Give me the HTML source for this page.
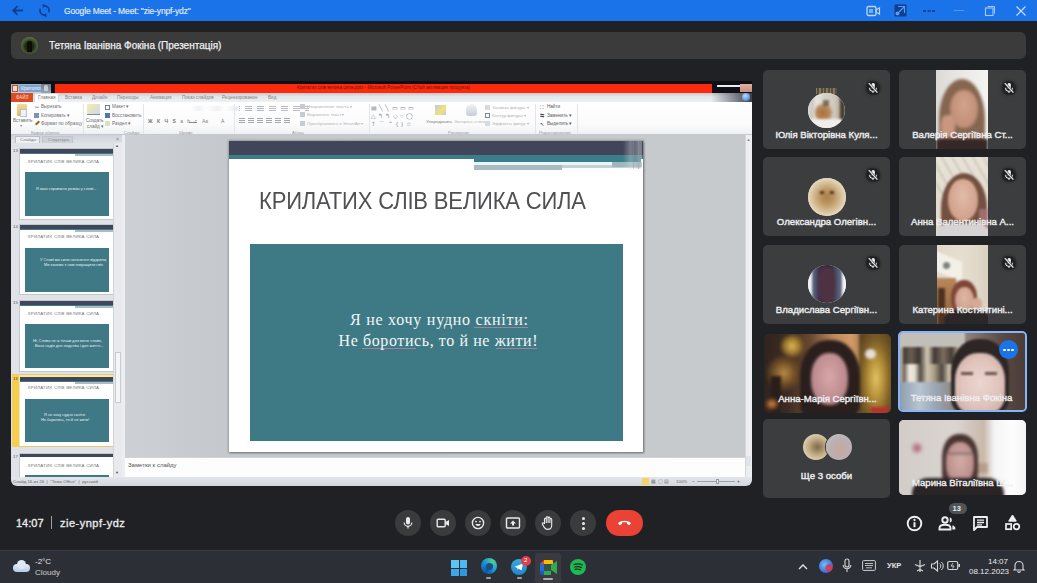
<!DOCTYPE html>
<html><head><meta charset="utf-8">
<style>
*{margin:0;padding:0;box-sizing:border-box}
html,body{width:1037px;height:583px;overflow:hidden;background:#202124;font-family:"Liberation Sans",sans-serif;position:relative}
.a{position:absolute}
.t{position:absolute;white-space:nowrap;line-height:1}
#title{left:0;top:0;width:1037px;height:21.4px;background:#1a73e8}
#namebar{left:11px;top:32px;width:1015px;height:27px;background:#3b3b3c;border-radius:6px}
/* PPT */
#ppt{left:11px;top:81px;width:741px;height:405px;background:#0f0f16;overflow:hidden;border-radius:0 0 6px 6px}
.pt{position:absolute;white-space:nowrap;line-height:1;color:#555;font-size:5px}
.tile{position:absolute;width:127px;height:79px;background:#3c3d3f;border-radius:5px;overflow:hidden}
.tname{position:absolute;left:0;right:0;top:59.5px;text-align:center;color:#eceef0;font-size:9.6px;-webkit-text-stroke:0.4px #eceef0;white-space:nowrap;line-height:1}
.mute{position:absolute;right:9px;top:11px;width:16px;height:14px;filter:drop-shadow(0 0 1px #111) drop-shadow(0 0 1.5px #222)}
.av{position:absolute;left:44px;top:22px;width:38px;height:38px;border-radius:50%;background:#b9a58c}
#taskbar{left:0;top:550px;width:1037px;height:33px;background:#2d2f36;box-shadow:inset 0 1px 0 #383b43}
.btn{position:absolute;top:510px;width:26px;height:26px;border-radius:50%;background:#3a3b3d}
</style></head><body>
<!-- TITLE BAR -->
<div id="title" class="a">
  <svg class="a" style="left:11px;top:4px" width="13" height="13" viewBox="0 0 13 13"><path d="M12 6.5H2.5M6.5 2.2L2.2 6.5L6.5 10.8" stroke="#0b3f96" stroke-width="1.8" fill="none"/></svg>
  <svg class="a" style="left:38px;top:4px" width="13" height="13" viewBox="0 0 13 13"><path d="M6.5 1.8A4.7 4.7 0 0 1 10.8 8.2M6.5 11.2A4.7 4.7 0 0 1 2.2 4.8" stroke="#0b3f96" stroke-width="1.7" fill="none"/><path d="M4.5 -0.2L8 1.8L4.8 3.8Z M8.5 13.2L5 11.2L8.2 9.2Z" fill="#0b3f96"/></svg>
  <div class="t" style="left:64px;top:6.5px;font-size:8.5px;color:#e3ecfb;letter-spacing:-0.15px;-webkit-text-stroke:0.15px #e3ecfb">Google Meet - Meet: "zie-ynpf-ydz"</div>
  <svg class="a" style="left:866px;top:5px" width="15" height="12" viewBox="0 0 15 12"><rect x="1" y="1.5" width="9" height="9" rx="1.5" stroke="#bcd4fb" stroke-width="1.3" fill="none"/><path d="M10 5L13.5 2.8V9.2L10 7Z" stroke="#bcd4fb" stroke-width="1.2" fill="none"/><rect x="3" y="4" width="4" height="4" fill="#bcd4fb" opacity=".6"/></svg>
  <svg class="a" style="left:894px;top:4px" width="13" height="13" viewBox="0 0 13 13"><rect x="0.5" y="0.5" width="12" height="12" rx="1" fill="#0e3f8f"/><path d="M4 2.5h6.5v6.5M10.5 2.5L5 8" stroke="#5b9af0" stroke-width="1.2" fill="none"/><circle cx="3.5" cy="9.5" r="2" fill="#5b9af0"/></svg>
  <div class="a" style="left:923px;top:10px;width:3px;height:2px;background:#0d47a1;box-shadow:4.5px 0 0 #0d47a1,9px 0 0 #0d47a1"></div>
  <div class="a" style="left:954px;top:10px;width:10px;height:1.2px;background:#5c95e8"></div>
  <svg class="a" style="left:984px;top:5px" width="12" height="12" viewBox="0 0 12 12"><rect x="1.5" y="3" width="7.5" height="7.5" stroke="#a8c7fa" stroke-width="1.1" fill="none"/><path d="M3.5 1.5H10.5V8.5" stroke="#a8c7fa" stroke-width="1" fill="none"/></svg>
  <svg class="a" style="left:1015px;top:5px" width="12" height="12" viewBox="0 0 12 12"><path d="M1.5 1.5L10.5 10.5M10.5 1.5L1.5 10.5" stroke="#c7dafc" stroke-width="1.2"/></svg>
</div>
<!-- NAME BAR -->
<div id="namebar" class="a">
  <div class="a" style="left:10px;top:5px;width:17px;height:17px;border-radius:50%;background:radial-gradient(circle at 50% 55%,#1d2415 30%,#4f6132 62%,#8aa05a 100%)"></div>
  <div class="a" style="left:16px;top:9px;width:5px;height:11px;background:#0c0e08;border-radius:2px 2px 0 0"></div>
  <div class="t" id="nm" style="left:38px;top:9px;font-size:10px;color:#eef0f2;-webkit-text-stroke:0.25px #eef0f2">Тетяна Іванівна Фокіна (Презентація)</div>
</div>

<!-- PPT WINDOW -->
<div id="ppt" class="a">
  <!-- title row -->
  <div class="a" style="left:0;top:3px;width:40px;height:8.5px;background:linear-gradient(#9fb0c6,#c9d3df)"></div>
  <div class="a" style="left:1px;top:4px;width:6px;height:7px;background:#e8e0d8;border:1px solid #c2502e"></div>
  <div class="a" style="left:8px;top:3.5px;width:22px;height:7px;background:#7fa3cf"></div>
  <div class="pt" style="left:10px;top:4.5px;font-size:5px;color:#f2f6fb">Критолог</div>
  <div class="a" style="left:30px;top:3px;width:10px;height:8.5px;background:linear-gradient(#6f7c8e,#9aa5b4)"></div><div class="a" style="left:33px;top:4px;width:4px;height:6px;background:#c6ccd4;border-radius:2px 2px 0 0"></div>
  <div class="a" style="left:44px;top:3px;width:657px;height:8.5px;background:#fb2a0c"></div>
  <div class="pt" style="left:286px;top:5px;font-size:4.6px;color:#7a1208">Критатих слів велика сила.pptx - Microsoft PowerPoint (Сбой активации продукта)</div>
  <div class="a" style="left:706px;top:3.5px;width:24px;height:2px;background:#e9ecef"></div>
  <div class="a" style="left:729px;top:3px;width:12px;height:8px;background:linear-gradient(#e2b0a2,#c98f80)"></div>
  <!-- tabs row -->
  <div class="a" style="left:0;top:11.5px;width:741px;height:9.5px;background:linear-gradient(#c5c8cc,#e4e7ea 40%,#eef0f2)"></div>
  <div class="a" style="left:700px;top:11.5px;width:41px;height:9.5px;background:linear-gradient(90deg,rgba(40,40,50,0),#3a3f4a)"></div>
  <div class="a" style="left:731px;top:12px;width:8px;height:8px;border-radius:50%;background:radial-gradient(circle at 40% 35%,#b9dcff,#2f6fc4)"></div>
  <div class="a" style="left:0;top:12px;width:21.5px;height:9px;background:#d84d26"></div>
  <div class="pt" style="left:5px;top:14.5px;color:#ffd9c9;font-size:4.5px">ФАЙЛ</div>
  <div class="a" style="left:23px;top:12px;width:25px;height:10px;background:#fcfcfc;border:1px solid #d5d9de;border-bottom:none"></div>
  <div class="pt" style="left:27px;top:14.5px;font-size:4.6px;color:#7a7a7a">Главная</div>
  <div class="pt" style="left:54px;top:14.5px;font-size:4.6px;color:#858585">Вставка</div>
  <div class="pt" style="left:81px;top:14.5px;font-size:4.6px;color:#858585">Дизайн</div>
  <div class="pt" style="left:106px;top:14.5px;font-size:4.6px;color:#858585">Переходы</div>
  <div class="pt" style="left:139px;top:14.5px;font-size:4.6px;color:#858585">Анимация</div>
  <div class="pt" style="left:171px;top:14.5px;font-size:4.6px;color:#858585">Показ слайдов</div>
  <div class="pt" style="left:211px;top:14.5px;font-size:4.6px;color:#858585">Рецензирование</div>
  <div class="pt" style="left:257px;top:14.5px;font-size:4.6px;color:#858585">Вид</div>
  <!-- ribbon -->
  <div class="a" style="left:0;top:21px;width:741px;height:33px;background:linear-gradient(#ffffff,#fbfbfc 70%,#eef1f4);border-bottom:1px solid #c4c9cf"></div>
  <!-- clipboard group -->
  <div class="a" style="left:6px;top:23px;width:10px;height:12px;background:linear-gradient(#f6d89a,#e3b660);border-radius:1px"></div>
  <div class="a" style="left:9px;top:28px;width:7px;height:8px;background:#eef2f7;border:1px solid #b8c2cf"></div>
  <div class="pt" style="left:2px;top:38px;font-size:4.6px;color:#6e6e6e">Вставить</div>
  <div class="pt" style="left:9px;top:43px;font-size:4px;color:#858585">▾</div>
  <div class="pt" style="left:24px;top:23.5px;font-size:5px;color:#556">✂</div>
  <div class="pt" style="left:30px;top:24px;font-size:4.6px;color:#6e6e6e">Вырезать</div>
  <div class="a" style="left:23px;top:32px;width:5px;height:5px;background:#7b93b5"></div>
  <div class="pt" style="left:30px;top:32.5px;font-size:4.6px;color:#6e6e6e">Копировать ▾</div>
  <div class="a" style="left:24px;top:41px;width:5px;height:2px;background:#8a6a2a;transform:rotate(-45deg)"></div>
  <div class="pt" style="left:30px;top:41px;font-size:4.6px;color:#6e6e6e">Формат по образцу</div>
  <div class="pt" style="left:20px;top:49.5px;font-size:4.2px;color:#9a9a9a">Буфер обмена</div>
  <div class="a" style="left:72px;top:23px;width:1px;height:30px;background:#e2e5e9"></div>
  <!-- slides group -->
  <div class="a" style="left:76px;top:23px;width:13px;height:11px;background:linear-gradient(135deg,#f4efb0,#cfd7e3);border-bottom:1px solid #7f8fa5"></div>
  <div class="pt" style="left:75px;top:38px;font-size:4.6px;color:#6e6e6e">Создать</div>
  <div class="pt" style="left:76px;top:43.5px;font-size:4.6px;color:#6e6e6e">слайд ▾</div>
  <div class="a" style="left:94px;top:24px;width:5px;height:5px;border:1px solid #6d7e96"></div>
  <div class="pt" style="left:101px;top:24px;font-size:4.6px;color:#6e6e6e">Макет ▾</div>
  <div class="a" style="left:94px;top:32px;width:5px;height:5px;background:#4f76b3"></div>
  <div class="pt" style="left:101px;top:32.5px;font-size:4.6px;color:#6e6e6e">Восстановить</div>
  <div class="a" style="left:94px;top:40px;width:5px;height:5px;background:#d9dfc9"></div>
  <div class="pt" style="left:101px;top:41px;font-size:4.6px;color:#6e6e6e">Раздел ▾</div>
  <div class="pt" style="left:113px;top:49.5px;font-size:4.2px;color:#9a9a9a">Слайды</div>
  <div class="a" style="left:132px;top:23px;width:1px;height:30px;background:#e2e5e9"></div>
  <!-- font group -->
  <div class="a" style="left:180px;top:25px;width:75px;height:5px;background:linear-gradient(90deg,#fff 0,#eceef1 10%,#fff 20%,#eceef1 35%,#fff 45%,#e6e9ed 60%,#fff 70%,#e6e9ed 85%,#fff 100%);opacity:.8"></div>
  <div class="pt" style="left:137px;top:38px;font-size:5px;color:#7a7a7a;font-weight:bold;letter-spacing:4.4px">ЖКЧS<span style="font-weight:normal">abc</span></div>
  <div class="a" style="left:178px;top:41px;width:8px;height:1px;background:#888"></div>
  <div class="pt" style="left:191px;top:37.5px;font-size:5px;color:#858585">Aa</div>
  <div class="pt" style="left:210px;top:37.5px;font-size:5px;color:#777">A</div>
  <div class="pt" style="left:168px;top:49.5px;font-size:4.2px;color:#9a9a9a">Шрифт</div>
  <div class="a" style="left:223px;top:23px;width:1px;height:30px;background:#e2e5e9"></div>
  <!-- paragraph group -->
  <div class="a" style="left:228px;top:24.5px;width:70px;height:6px;background:repeating-linear-gradient(90deg,transparent 0 1px,#fff 1px 6px,transparent 6px 12px),repeating-linear-gradient(#8d949c 0 1px,transparent 1px 2px);opacity:.6"></div>
  <div class="a" style="left:228px;top:37px;width:54px;height:6px;background:repeating-linear-gradient(90deg,transparent 0 6px,#fff 6px 9px),repeating-linear-gradient(#7d858e 0 1px,transparent 1px 2px);opacity:.7"></div>
  <div class="a" style="left:289px;top:23px;width:5px;height:5px;background:#c7ccd3"></div>
  <div class="pt" style="left:296px;top:24px;font-size:4.4px;color:#b4b4b4">Направление текста ▾</div>
  <div class="a" style="left:289px;top:31px;width:5px;height:5px;background:#c7ccd3"></div>
  <div class="pt" style="left:296px;top:32px;font-size:4.4px;color:#b4b4b4">Выровнять текст ▾</div>
  <div class="a" style="left:289px;top:40px;width:5px;height:5px;background:#c7ccd3"></div>
  <div class="pt" style="left:296px;top:41px;font-size:4.4px;color:#b4b4b4">Преобразовать в SmartArt ▾</div>
  <div class="pt" style="left:281px;top:49.5px;font-size:4.2px;color:#9a9a9a">Абзац</div>
  <div class="a" style="left:358px;top:23px;width:1px;height:30px;background:#e2e5e9"></div>
  <!-- drawing group -->
  <div class="pt" style="left:360px;top:23.5px;font-size:6px;color:#7d8795;letter-spacing:2.2px">▤╲╲▭▭▭</div>
  <div class="pt" style="left:360px;top:31.5px;font-size:6px;color:#7d8795;letter-spacing:2.2px">△↰↰◇○◯</div>
  <div class="pt" style="left:360px;top:39.5px;font-size:6px;color:#7d8795;letter-spacing:3px">↿⌒⌃{}☆</div>
  <div class="a" style="left:424px;top:24px;width:11px;height:10px;background:linear-gradient(135deg,#bfcbd8,#f2e27a 60%,#c4ccd6)"></div>
  <div class="pt" style="left:415px;top:39px;font-size:4.4px;color:#7a7a7a">Упорядочить</div>
  <div class="a" style="left:455px;top:23px;width:11px;height:12px;border-radius:50% 50% 3px 3px;background:linear-gradient(#f1f2f4,#c9ced5)"></div>
  <div class="pt" style="left:443px;top:39px;font-size:4.4px;color:#b4b4b4">Экспресс-стили</div>
  <div class="a" style="left:474px;top:24px;width:5px;height:5px;background:#d7dbe0"></div>
  <div class="pt" style="left:481px;top:24.5px;font-size:4.4px;color:#b4b4b4">Заливка фигуры ▾</div>
  <div class="a" style="left:474px;top:32px;width:5px;height:5px;border:1px solid #7f8b9b"></div>
  <div class="pt" style="left:481px;top:33px;font-size:4.4px;color:#b4b4b4">Контур фигуры ▾</div>
  <div class="a" style="left:474px;top:40px;width:5px;height:5px;background:#d7dbe0"></div>
  <div class="pt" style="left:481px;top:41px;font-size:4.4px;color:#b4b4b4">Эффекты фигур ▾</div>
  <div class="pt" style="left:437px;top:49.5px;font-size:4.2px;color:#9a9a9a">Рисование</div>
  <div class="a" style="left:524px;top:23px;width:1px;height:30px;background:#e2e5e9"></div>
  <!-- edit group -->
  <div class="pt" style="left:529px;top:23.5px;font-size:5px;color:#445">⛶</div>
  <div class="pt" style="left:536px;top:24px;font-size:4.6px;color:#5a5a5a">Найти</div>
  <div class="pt" style="left:529px;top:32px;font-size:5px;color:#445">⇆</div>
  <div class="pt" style="left:536px;top:32.5px;font-size:4.6px;color:#5a5a5a">Заменить ▾</div>
  <div class="pt" style="left:529px;top:40.5px;font-size:5px;color:#445">↖</div>
  <div class="pt" style="left:536px;top:41px;font-size:4.6px;color:#5a5a5a">Выделить ▾</div>
  <div class="pt" style="left:528px;top:49.5px;font-size:4.2px;color:#9a9a9a">Редактирование</div>
  <div class="a" style="left:566px;top:23px;width:1px;height:30px;background:#e2e5e9"></div>

  <!-- body -->
  <div class="a" style="left:0;top:54px;width:741px;height:342px;background:#c9cdd2"></div>
  <!-- slide pane -->
  <div class="a" style="left:0;top:54px;width:111px;height:342px;background:#dfe3e8"></div>
  <div class="a" style="left:0;top:54px;width:111px;height:8px;background:linear-gradient(#cfd3d9,#dde1e6)"></div>
  <div class="a" style="left:4px;top:54.5px;width:25px;height:7.5px;background:#eef0f3;border:1px solid #b9bec5;border-bottom:none"></div>
  <div class="pt" style="left:9px;top:56.5px;font-size:4.4px;color:#7a7a7a">Слайды</div>
  <div class="a" style="left:31px;top:55px;width:31px;height:7px;background:#cdd1d7;border:1px solid #c0c5cc;border-bottom:none"></div><div class="pt" style="left:37px;top:56.5px;font-size:4.4px;color:#8a8a8a">Структура</div>
  <div class="pt" style="left:105px;top:56px;font-size:5px;color:#7a7a7a">×</div>
  <div class="a" style="left:102px;top:62px;width:9px;height:334px;background:#e8eaed;border-left:1px solid #d0d4d9"></div>
  <div class="pt" style="left:104px;top:63px;font-size:4px;color:#7a7a7a">▲</div>
  <div class="pt" style="left:104px;top:390px;font-size:4px;color:#7a7a7a">▼</div>
  <div class="a" style="left:104px;top:271px;width:6px;height:51px;background:#f4f5f7;border:1px solid #c6cbd1"></div>
    <!-- thumbnails -->
  <div class="pt" style="left:2px;top:68px;font-size:4.4px;color:#555">13</div>
  <div class="a" style="left:9px;top:67.5px;width:93px;height:70px;background:#fff;box-shadow:0 0 0 1px #c3c8ce"></div>
  <div class="a" style="left:9px;top:67.5px;width:93px;height:4.5px;background:#414559"></div>
  <div class="a" style="left:9px;top:72px;width:93px;height:1px;background:#3f7a86"></div><div class="a" style="left:64px;top:73px;width:38px;height:1.5px;background:#a9bec4"></div>
  <div class="pt" style="left:17px;top:78.5px;font-size:4.4px;color:#747474;letter-spacing:0.2px">КРИЛАТИХ СЛІВ ВЕЛИКА СИЛА</div>
  <div class="a" style="left:13.5px;top:90.5px;width:84px;height:44px;background:#3f7985"></div>
  <div class="pt" style="left:25px;top:105.5px;font-size:3.9px;color:#e6eef0">Я маю справжню розкіш у слові...</div>

  <div class="pt" style="left:2px;top:144px;font-size:4.4px;color:#555">14</div>
  <div class="a" style="left:9px;top:143.5px;width:93px;height:69px;background:#fff;box-shadow:0 0 0 1px #c3c8ce"></div>
  <div class="a" style="left:9px;top:143.5px;width:93px;height:4.5px;background:#414559"></div>
  <div class="a" style="left:9px;top:148px;width:93px;height:1px;background:#3f7a86"></div><div class="a" style="left:64px;top:149px;width:38px;height:1.5px;background:#a9bec4"></div>
  <div class="pt" style="left:17px;top:154px;font-size:4.4px;color:#747474;letter-spacing:0.2px">КРИЛАТИХ СЛІВ ВЕЛИКА СИЛА</div>
  <div class="a" style="left:13.5px;top:167px;width:84px;height:43.5px;background:#3f7985"></div>
  <div class="pt" style="left:29px;top:177px;font-size:3.9px;color:#e6eef0">У Слові ми сили натхнення відкрили,</div>
  <div class="pt" style="left:33px;top:182px;font-size:3.9px;color:#e6eef0">Ми хочемо з ним покращити світ.</div>

  <div class="pt" style="left:2px;top:220px;font-size:4.4px;color:#555">15</div>
  <div class="a" style="left:9px;top:219.5px;width:93px;height:70px;background:#fff;box-shadow:0 0 0 1px #c3c8ce"></div>
  <div class="a" style="left:9px;top:219.5px;width:93px;height:4.5px;background:#414559"></div>
  <div class="a" style="left:9px;top:224px;width:93px;height:1px;background:#3f7a86"></div><div class="a" style="left:64px;top:225px;width:38px;height:1.5px;background:#a9bec4"></div>
  <div class="pt" style="left:17px;top:231px;font-size:4.4px;color:#747474;letter-spacing:0.2px">КРИЛАТИХ СЛІВ ВЕЛИКА СИЛА</div>
  <div class="a" style="left:13.5px;top:242.5px;width:84px;height:44px;background:#3f7985"></div>
  <div class="pt" style="left:22px;top:258px;font-size:3.9px;color:#e6eef0">Ні, Слово не ж тільки для мене слово,</div>
  <div class="pt" style="left:24px;top:263px;font-size:3.9px;color:#e6eef0">Воно надія для людства і для життя...</div>

  <!-- selected 16 -->
  <div class="a" style="left:0.5px;top:293.2px;width:103px;height:73px;background:#f6e8a8;border:1px solid #e9c96a"></div>
  <div class="a" style="left:0.5px;top:293.2px;width:7px;height:73px;background:#f4cf52"></div>
  <div class="pt" style="left:2px;top:295.7px;font-size:4.4px;color:#444">16</div>
  <div class="a" style="left:8.5px;top:295.7px;width:93px;height:69px;background:#fff"></div>
  <div class="a" style="left:8.5px;top:295.7px;width:93px;height:4.5px;background:#414559"></div>
  <div class="a" style="left:8.5px;top:300.2px;width:93px;height:1px;background:#3f7a86"></div><div class="a" style="left:63.5px;top:301.2px;width:38px;height:1.5px;background:#a9bec4"></div>
  <div class="pt" style="left:17px;top:305.2px;font-size:4.4px;color:#747474;letter-spacing:0.2px">КРИЛАТИХ СЛІВ ВЕЛИКА СИЛА</div>
  <div class="a" style="left:13.5px;top:318.2px;width:84px;height:43px;background:#3f7985"></div>
  <div class="pt" style="left:33px;top:332.2px;font-size:3.9px;color:#e6eef0">Я не хочу нудно скніти:</div>
  <div class="pt" style="left:30px;top:337.2px;font-size:3.9px;color:#e6eef0">Не боротись, то й не жити!</div>

  <div class="pt" style="left:2px;top:374px;font-size:4.4px;color:#555">17</div>
  <div class="a" style="left:9px;top:372.5px;width:93px;height:30px;background:#fff;box-shadow:0 0 0 1px #c3c8ce"></div>
  <div class="a" style="left:9px;top:372.5px;width:93px;height:3.5px;background:#414559"></div>
  <div class="pt" style="left:17px;top:383px;font-size:4.4px;color:#747474;letter-spacing:0.2px">КРИЛАТИХ СЛІВ ВЕЛИКА СИЛА</div>
  <div class="a" style="left:13.5px;top:394px;width:84px;height:5px;background:#3f7985"></div>

  <!-- redraw scrollbar over thumbs -->
  <div class="a" style="left:102px;top:62px;width:9px;height:334px;background:#e8eaed;border-left:1px solid #d0d4d9"></div>
  <div class="pt" style="left:104px;top:63px;font-size:4px;color:#555">▲</div>
  <div class="pt" style="left:104px;top:390px;font-size:4px;color:#555">▼</div>
  <div class="a" style="left:103.5px;top:271px;width:6.5px;height:51px;background:#f4f5f7;border:1px solid #c6cbd1"></div>
  <div class="a" style="left:111px;top:54px;width:3px;height:342px;background:#eceef1"></div>

  <!-- main area -->
  <div class="a" style="left:114px;top:54px;width:620px;height:322px;background:linear-gradient(90deg,#cdd0d4,#c5c9cd 15%,#c6cacd)"></div>
  <!-- slide -->
  <div class="a" style="left:218px;top:60px;width:414px;height:311px;background:#fff;box-shadow:0 0 2px 1px rgba(0,0,0,.22),1px 1px 2px rgba(0,0,0,.3)"></div>
  <div class="a" style="left:218px;top:60px;width:414px;height:14px;background:#414559"></div>
  <div class="a" style="left:218px;top:74px;width:414px;height:3.5px;background:#3d7d89"></div>
  <div class="a" style="left:463px;top:77px;width:167px;height:4px;background:#3d7d89"></div>
  <div class="a" style="left:463px;top:81px;width:138px;height:2.5px;background:#e6f6f9"></div>
  <div class="a" style="left:463px;top:83.5px;width:88px;height:5px;background:#a9bac0"></div>
  <div class="a" style="left:551px;top:83.5px;width:79px;height:3px;background:#c3d1d6"></div><div class="a" style="left:601px;top:81px;width:30px;height:5px;background:#9fb6bc"></div>
  <div class="a" style="left:612px;top:60px;width:19px;height:28px;background:linear-gradient(90deg,rgba(255,255,255,0),rgba(220,224,230,.35) 40%,rgba(240,242,245,.2) 60%,rgba(180,186,196,.5) 85%,rgba(255,255,255,.3))"></div>
  <div class="a" style="left:622px;top:60px;width:1px;height:28px;background:#8a90a0;opacity:.4"></div>
  <div class="a" style="left:627px;top:60px;width:1px;height:28px;background:#9aa0ad;opacity:.4"></div>
  <div class="t" id="sltitle" style="left:248px;top:108.5px;font-size:23.5px;color:#505052;letter-spacing:-0.2px;transform-origin:0 0;transform:scaleX(0.937)">КРИЛАТИХ СЛІВ ВЕЛИКА СИЛА</div>
  <div class="a" style="left:239px;top:163px;width:373px;height:197px;background:#3e7a86"></div>
  <div class="t" id="sl1" style="left:339px;top:231px;font-family:'Liberation Serif',serif;font-size:16px;color:#f4f6f6;letter-spacing:0.75px">Я не хочу нудно скніти:</div>
  <div class="a" style="left:463px;top:246px;width:54px;height:1px;background:#c98aa0;opacity:.7"></div>
  <div class="a" style="left:351px;top:266.5px;width:54px;height:1px;background:#c98aa0;opacity:.7"></div>
  <div class="a" style="left:484.5px;top:266.5px;width:41px;height:1px;background:#c98aa0;opacity:.7"></div>
  <div class="t" id="sl2" style="left:327.5px;top:252px;font-family:'Liberation Serif',serif;font-size:16px;color:#f4f6f6;letter-spacing:0.6px">Не боротись, то й не жити!</div>

  <!-- right scrollbar -->
  <div class="a" style="left:734px;top:54px;width:7px;height:342px;background:#eceef1;border-left:1px solid #d2d6db"></div>
  <div class="pt" style="left:735.5px;top:57px;font-size:4px;color:#777">▲</div>
  <div class="a" style="left:735px;top:375px;width:5px;height:10px;background:#e0e3e7"></div>
  <!-- notes -->
  <div class="a" style="left:114px;top:376px;width:620px;height:20px;background:#fdfdfd;border-top:1px solid #d0d4d9"></div>
  <div class="pt" style="left:117px;top:381px;font-size:6px;color:#555">Заметки к слайду</div>
  <!-- status bar -->
  <div class="a" style="left:0;top:396px;width:741px;height:9px;background:linear-gradient(#e3e6ea,#d3d7dc)"></div>
  <div class="pt" style="left:2px;top:398.5px;font-size:4.4px;color:#666">Слайд 16 из 26 &nbsp;|&nbsp; "Тема Office" &nbsp;|&nbsp; русский</div>
  <div class="a" style="left:631px;top:397px;width:7px;height:7px;background:#f5d26c"></div>
  <div class="pt" style="left:640px;top:398px;font-size:5px;color:#777;letter-spacing:1.5px">▦▢▤</div>
  <div class="pt" style="left:665px;top:398.5px;font-size:4.4px;color:#666">100%</div>
  <div class="pt" style="left:681px;top:397.5px;font-size:5px;color:#555">−</div>
  <div class="a" style="left:686px;top:400px;width:38px;height:1px;background:#9aa2ab"></div>
  <div class="a" style="left:705px;top:398px;width:3px;height:5px;background:#f2f2f2;border:1px solid #999"></div>
  <div class="pt" style="left:726px;top:397.5px;font-size:5px;color:#555">+</div>
</div>


<!-- TILES -->
<div class="tile" style="left:763px;top:70px">
  <div class="a" style="left:53px;top:18px;width:21px;height:6px;filter:blur(0.6px);background:repeating-linear-gradient(90deg,#9c8a5c 0 1.5px,#5a5448 1.5px 3.5px);opacity:.8"></div>
  <div class="a" style="left:45px;top:23px;width:37px;height:35px;border-radius:50%;overflow:hidden;background:#d9d6d0">
    <div class="a" style="left:-2px;top:-2px;width:41px;height:39px;filter:blur(1.1px);background:linear-gradient(90deg,#e4e2de 0,#c9c6c0 15%,#e8e6e2 25%,#d8d2c8 45%,#cfc8bc 70%,#bdb4a6 80%,#3c3228 86%,#4a4036 92%,#bdb6aa 100%)">
      <div class="a" style="left:9px;top:12px;width:18px;height:18px;border-radius:40%;background:radial-gradient(ellipse at 45% 55%,#a8703e,#b88a5c 50%,transparent 75%)"></div>
      <div class="a" style="left:17px;top:9px;width:6px;height:6px;background:#5a4a3a;opacity:.7"></div>
      <div class="a" style="left:4px;top:28px;width:32px;height:11px;background:#f0eeea"></div>
    </div>
  </div>
  <svg class="mute" viewBox="0 0 16 14"><circle cx="8" cy="7" r="7.5" fill="rgba(0,0,0,.18)"/><rect x="6.3" y="2" width="3.6" height="6" rx="1.8" fill="#f0f0f0"/><path d="M4.6 6.8a3.4 3.4 0 0 0 6.8 0" stroke="#f0f0f0" stroke-width="1.1" fill="none"/><path d="M8 10.2V12" stroke="#f0f0f0" stroke-width="1.1"/><path d="M3.8 2.2L12.4 11.6" stroke="#3c3c3d" stroke-width="2.2"/><path d="M3.8 2.2L12.4 11.6" stroke="#f0f0f0" stroke-width="1.1"/></svg>
  <div class="tname">Юлія Вікторівна Куля...</div>
</div>
<div class="tile" style="left:899px;top:70px">
  <div class="a" style="left:37px;top:0;width:52px;height:79px;overflow:hidden;background:#e9e8e5">
    <div class="a" style="left:-3px;top:-3px;width:58px;height:85px;filter:blur(1.5px);background:linear-gradient(90deg,#d9d8d4,#ebeae7 55%,#f4f4f2)">
      <div class="a" style="left:6px;top:12px;width:46px;height:80px;border-radius:50% 50% 10% 10%;background:#866650"></div>
      <div class="a" style="left:17px;top:23px;width:28px;height:38px;border-radius:48%;background:radial-gradient(ellipse at 50% 40%,#d2a48b,#bf8e76 70%,#9b6d58)"></div>
      <div class="a" style="left:8px;top:48px;width:14px;height:22px;border-radius:40%;background:#c99780"></div>
      <div class="a" style="left:3px;top:72px;width:52px;height:13px;background:#352826"></div>
    </div>
  </div>
  <svg class="mute" viewBox="0 0 16 14"><circle cx="8" cy="7" r="7.5" fill="rgba(0,0,0,.18)"/><rect x="6.3" y="2" width="3.6" height="6" rx="1.8" fill="#f0f0f0"/><path d="M4.6 6.8a3.4 3.4 0 0 0 6.8 0" stroke="#f0f0f0" stroke-width="1.1" fill="none"/><path d="M8 10.2V12" stroke="#f0f0f0" stroke-width="1.1"/><path d="M3.8 2.2L12.4 11.6" stroke="#3c3c3d" stroke-width="2.2"/><path d="M3.8 2.2L12.4 11.6" stroke="#f0f0f0" stroke-width="1.1"/></svg>
  <div class="tname">Валерія Сергіївна Ст...</div>
</div>
<div class="tile" style="left:763px;top:157px">
  <div class="a" style="left:45px;top:21px;width:38px;height:38px;border-radius:50%;overflow:hidden;background:#e8dfcf">
    <div class="a" style="left:0;top:0;width:38px;height:38px;filter:blur(1.2px);background:radial-gradient(ellipse at 50% 50%,#a97e4a 0,#bf9863 28%,#d8c29c 55%,#efe6d6 80%,#f5f0e6 100%)">
      <div class="a" style="left:12px;top:13px;width:4px;height:3px;background:#4a3a28"></div>
      <div class="a" style="left:22px;top:13px;width:4px;height:3px;background:#4a3a28"></div>
    </div>
  </div>
  <svg class="mute" viewBox="0 0 16 14"><circle cx="8" cy="7" r="7.5" fill="rgba(0,0,0,.18)"/><rect x="6.3" y="2" width="3.6" height="6" rx="1.8" fill="#f0f0f0"/><path d="M4.6 6.8a3.4 3.4 0 0 0 6.8 0" stroke="#f0f0f0" stroke-width="1.1" fill="none"/><path d="M8 10.2V12" stroke="#f0f0f0" stroke-width="1.1"/><path d="M3.8 2.2L12.4 11.6" stroke="#3c3c3d" stroke-width="2.2"/><path d="M3.8 2.2L12.4 11.6" stroke="#f0f0f0" stroke-width="1.1"/></svg>
  <div class="tname">Олександра Олегівн...</div>
</div>
<div class="tile" style="left:899px;top:157px">
  <div class="a" style="left:37px;top:0;width:52px;height:79px;overflow:hidden;background:#e4dfd4">
    <div class="a" style="left:-3px;top:-3px;width:58px;height:85px;filter:blur(1.3px);background:linear-gradient(#e8e3d8,#ded7ca)">
      <div class="a" style="left:0;top:0;width:58px;height:40px;background:repeating-linear-gradient(60deg,transparent 0 7px,#bdb6a8 7px 9px);opacity:.55"></div>
      <div class="a" style="left:8px;top:19px;width:46px;height:70px;border-radius:50% 50% 10% 10%;background:#74503f"></div>
      <div class="a" style="left:15px;top:25px;width:30px;height:42px;border-radius:48%;background:radial-gradient(ellipse at 50% 40%,#e2bca7,#d0a18c 70%,#aa7c69)"></div>
      <div class="a" style="left:46px;top:55px;width:10px;height:20px;background:#b07a80;opacity:.7"></div>
      <div class="a" style="left:5px;top:70px;width:50px;height:15px;border-radius:8px 8px 0 0;background:#d6d3d5"></div>
    </div>
  </div>
  <svg class="mute" viewBox="0 0 16 14"><circle cx="8" cy="7" r="7.5" fill="rgba(0,0,0,.18)"/><rect x="6.3" y="2" width="3.6" height="6" rx="1.8" fill="#f0f0f0"/><path d="M4.6 6.8a3.4 3.4 0 0 0 6.8 0" stroke="#f0f0f0" stroke-width="1.1" fill="none"/><path d="M8 10.2V12" stroke="#f0f0f0" stroke-width="1.1"/><path d="M3.8 2.2L12.4 11.6" stroke="#3c3c3d" stroke-width="2.2"/><path d="M3.8 2.2L12.4 11.6" stroke="#f0f0f0" stroke-width="1.1"/></svg>
  <div class="tname">Анна Валентинівна А...</div>
</div>
<div class="tile" style="left:763px;top:245px">
  <div class="a" style="left:45px;top:20px;width:38px;height:38px;border-radius:50%;overflow:hidden;background:#f2f2f4">
    <div class="a" style="left:-2px;top:-2px;width:42px;height:42px;filter:blur(1px)">
      <div class="a" style="left:5px;top:0;width:32px;height:42px;background:linear-gradient(90deg,#6a7e9a,#3e3046 25%,#2e2130 60%,#6d7b98)"></div>
      <div class="a" style="left:13px;top:4px;width:16px;height:36px;border-radius:40%;background:#4e3244"></div>
      <div class="a" style="left:0;top:0;width:6px;height:42px;background:#f4f4f6"></div>
      <div class="a" style="left:36px;top:0;width:6px;height:42px;background:#f4f4f6"></div>
    </div>
  </div>
  <svg class="mute" viewBox="0 0 16 14"><circle cx="8" cy="7" r="7.5" fill="rgba(0,0,0,.18)"/><rect x="6.3" y="2" width="3.6" height="6" rx="1.8" fill="#f0f0f0"/><path d="M4.6 6.8a3.4 3.4 0 0 0 6.8 0" stroke="#f0f0f0" stroke-width="1.1" fill="none"/><path d="M8 10.2V12" stroke="#f0f0f0" stroke-width="1.1"/><path d="M3.8 2.2L12.4 11.6" stroke="#3c3c3d" stroke-width="2.2"/><path d="M3.8 2.2L12.4 11.6" stroke="#f0f0f0" stroke-width="1.1"/></svg>
  <div class="tname">Владислава Сергіївн...</div>
</div>
<div class="tile" style="left:899px;top:245px">
  <div class="a" style="left:38px;top:0;width:51px;height:79px;overflow:hidden;background:#e3dccd">
    <div class="a" style="left:-3px;top:-3px;width:57px;height:85px;filter:blur(1.3px);background:linear-gradient(90deg,#e0d8c8,#e6dfd0 50%,#d9d0bf)">
      <div class="a" style="left:0;top:14px;width:28px;height:20px;background:#f3f0e8;transform:skewY(22deg)"></div>
      <div class="a" style="left:9px;top:20px;width:7px;height:7px;border-radius:50%;background:#808080"></div>
      <div class="a" style="left:0;top:36px;width:22px;height:50px;background:linear-gradient(#b8875a,#8a5c3a)"></div>
      <div class="a" style="left:4px;top:46px;width:7px;height:40px;background:#4e3220"></div>
      <div class="a" style="left:17px;top:38px;width:26px;height:36px;border-radius:48%;background:#7f4638"></div>
      <div class="a" style="left:21px;top:45px;width:19px;height:26px;border-radius:48%;background:radial-gradient(ellipse at 50% 40%,#e0b8a4,#c59582)"></div>
      <div class="a" style="left:38px;top:56px;width:10px;height:12px;border-radius:40%;background:#d5ab98"></div>
      <div class="a" style="left:10px;top:68px;width:47px;height:18px;border-radius:10px 10px 0 0;background:#2b2729"></div>
    </div>
  </div>
  <svg class="mute" viewBox="0 0 16 14"><circle cx="8" cy="7" r="7.5" fill="rgba(0,0,0,.18)"/><rect x="6.3" y="2" width="3.6" height="6" rx="1.8" fill="#f0f0f0"/><path d="M4.6 6.8a3.4 3.4 0 0 0 6.8 0" stroke="#f0f0f0" stroke-width="1.1" fill="none"/><path d="M8 10.2V12" stroke="#f0f0f0" stroke-width="1.1"/><path d="M3.8 2.2L12.4 11.6" stroke="#3c3c3d" stroke-width="2.2"/><path d="M3.8 2.2L12.4 11.6" stroke="#f0f0f0" stroke-width="1.1"/></svg>
  <div class="tname">Катерина Костянтині...</div>
</div>
<div class="tile" style="left:764px;top:333.5px;background:#3a2a22">
  <div class="a" style="left:-3px;top:-3px;width:133px;height:85px;filter:blur(1.5px)">
    <div class="a" style="left:0;top:0;width:133px;height:85px;background:linear-gradient(90deg,#2e221d 0,#3c2b22 20%,#6a4a30 38%,#c08a5c 55%,#d49a68 68%,#8a6a34 82%,#4a3620 100%)"></div>
    <div class="a" style="left:18px;top:3px;width:26px;height:24px;border-radius:50%;background:radial-gradient(circle,#d8b858 0,#a07a2c 40%,transparent 72%)"></div>
    <div class="a" style="left:5px;top:24px;width:36px;height:36px;background:radial-gradient(ellipse,#b88a44 0,#6d4c25 45%,transparent 75%)"></div>
    <div class="a" style="left:10px;top:45px;width:10px;height:40px;background:#2a1e1a"></div>
    <div class="a" style="left:3px;top:66px;width:16px;height:14px;background:radial-gradient(ellipse,#e08838,transparent 70%)"></div>
    <div class="a" style="left:98px;top:2px;width:34px;height:83px;background:radial-gradient(ellipse at 50% 55%,#e0c464 0,#b8923a 30%,#7d5e26 60%,#4a3820 100%)"></div>
    <div class="a" style="left:104px;top:18px;width:11px;height:10px;border-radius:50%;background:#e6e0da"></div>
    <div class="a" style="left:39px;top:9px;width:60px;height:80px;border-radius:45% 45% 20% 20%;background:#2a1f1d"></div>
    <div class="a" style="left:50px;top:22px;width:37px;height:52px;border-radius:46%;background:radial-gradient(ellipse at 50% 45%,#d6a6a8,#be8c90 60%,#946a6c)"></div>
    <div class="a" style="left:110px;top:76px;width:18px;height:6px;background:#b82e2e"></div>
  </div>
  <div class="tname" style="top:60.5px">Анна-Марія Сергіївн...</div>
</div>
<div class="tile" style="left:898px;top:331px;width:129px;height:80.5px;background:#6b6460;border:2px solid #8ab4f8">
  <div class="a" style="left:-3px;top:-3px;width:131px;height:82px;filter:blur(1.3px)">
    <div class="a" style="left:0;top:0;width:131px;height:82px;background:linear-gradient(90deg,#a8a49c 0,#b4afa6 35%,#8a7e76 55%,#5a4a44 80%,#4a3a36 100%)"></div>
    <div class="a" style="left:0;top:0;width:68px;height:18px;background:#c2bfb8"></div>
    <div class="a" style="left:6px;top:17px;width:54px;height:17px;background:linear-gradient(90deg,#403832 0,#6a5e52 15%,#3a3430 30%,#d8cfb8 45%,#3e3832 58%,#7a6e5e 75%,#443c36 90%,#9a907e)"></div>
    <div class="a" style="left:6px;top:34px;width:54px;height:18px;background:linear-gradient(90deg,#5a4e42 0,#efeae0 12%,#e6dfcf 22%,#544a40 32%,#cfc6b0 45%,#a89c86 58%,#4e463e 72%,#d2c9b2 86%,#6a6050)"></div>
    <div class="a" style="left:0;top:52px;width:64px;height:30px;background:linear-gradient(90deg,#8898aa,#b8c4d0 35%,#9aa6b4 60%,#8a7c70)"></div>
    <div class="a" style="left:54px;top:9px;width:58px;height:74px;border-radius:45% 45% 20% 20%;background:#2e2626"></div>
    <div class="a" style="left:58px;top:23px;width:50px;height:60px;border-radius:45% 45% 30% 30%;background:radial-gradient(ellipse at 50% 50%,#ecd6d0,#e0c4bc 55%,#c4a49c)"></div>
    <div class="a" style="left:64px;top:42px;width:12px;height:3px;background:#6a5450"></div>
    <div class="a" style="left:88px;top:42px;width:12px;height:3px;background:#6a5450"></div>
  </div>
  <div class="a" style="left:99px;top:7px;width:19px;height:19px;border-radius:50%;background:#1a73e8"></div>
  <div class="a" style="left:103px;top:15.5px;width:2.5px;height:2.5px;border-radius:50%;background:#fff;box-shadow:4px 0 0 #fff,8px 0 0 #fff"></div>
  <div class="tname" style="top:59.5px;left:-2px">Тетяна Іванівна Фокіна</div>
</div>
<div class="tile" style="left:763px;top:419px">
  <div class="a" style="left:40px;top:15px;width:26px;height:26px;border-radius:50%;overflow:hidden"><div class="a" style="left:-2px;top:-2px;width:30px;height:30px;filter:blur(1px);background:radial-gradient(ellipse at 55% 50%,#7a6648 0,#c4ae84 40%,#e4d9c0 70%,#b7a684)"></div></div>
  <div class="a" style="left:63px;top:15px;width:26px;height:26px;border-radius:50%;overflow:hidden;box-shadow:0 0 0 1px #3c3c3d"><div class="a" style="left:-2px;top:-2px;width:30px;height:30px;filter:blur(1px);background:radial-gradient(ellipse at 55% 60%,#c8a89c 0,#b9b0b3 45%,#c4c2c6 75%,#9ea0a6)"></div></div>
  <div class="tname" style="top:51.5px">Ще 3 особи</div>
</div>
<div class="tile" style="left:899px;top:420px;height:75px;background:#cfcac6">
  <div class="a" style="left:-3px;top:-3px;width:133px;height:85px;filter:blur(1.5px)">
    <div class="a" style="left:0;top:0;width:133px;height:85px;background:linear-gradient(90deg,#d2ccc8 0,#dad5d1 45%,#c9b8aa 66%,#f4f4f4 74%,#fdfdfd 88%,#f2f2f2)"></div>
    <div class="a" style="left:14px;top:24px;width:14px;height:14px;background:radial-gradient(#b45870,transparent 70%)"></div>
    <div class="a" style="left:80px;top:46px;width:12px;height:10px;background:#a88a70;opacity:.6"></div>
    <div class="a" style="left:46px;top:17px;width:36px;height:50px;border-radius:45% 45% 20% 20%;background:#4a3532"></div>
    <div class="a" style="left:50px;top:25px;width:28px;height:42px;border-radius:45%;background:radial-gradient(ellipse at 50% 45%,#d2aca6,#be928e 60%,#9c7470)"></div>
    <div class="a" style="left:52px;top:35px;width:24px;height:3px;background:#7a6a68;opacity:.6"></div>
    <div class="a" style="left:16px;top:61px;width:92px;height:24px;border-radius:16px 16px 0 0;background:#2b2425"></div>
  </div>
  <div class="tname" style="top:58px">Марина Віталіївна Ш...</div>
</div>

<!-- CONTROLS -->
<div class="t" id="tm" style="left:16px;top:517.5px;font-size:11px;color:#e8eaed;-webkit-text-stroke:0.35px #e8eaed">14:07</div>
<div class="a" style="left:51px;top:516px;width:1px;height:13px;background:#9aa0a6"></div>
<div class="t" id="cd" style="left:60px;top:517.5px;font-size:11px;color:#e8eaed;letter-spacing:0.5px;-webkit-text-stroke:0.35px #e8eaed">zie-ynpf-ydz</div>

<div class="btn" style="left:395px"><svg class="a" style="left:7px;top:6px" width="12" height="14" viewBox="0 0 12 14"><rect x="4" y="1" width="4" height="7.5" rx="2" fill="#e8eaed"/><path d="M2.2 6.5a3.8 3.8 0 0 0 7.6 0" stroke="#e8eaed" stroke-width="1.2" fill="none"/><path d="M6 10.3V12.5" stroke="#e8eaed" stroke-width="1.2"/></svg></div>
<div class="btn" style="left:430px"><svg class="a" style="left:6px;top:7px" width="14" height="12" viewBox="0 0 14 12"><rect x="1.2" y="2.2" width="8" height="7.6" rx="1" stroke="#e8eaed" stroke-width="1.4" fill="none"/><path d="M9.5 5L13 3V9L9.5 7Z" fill="#e8eaed"/></svg></div>
<div class="btn" style="left:465px"><svg class="a" style="left:6px;top:6px" width="14" height="14" viewBox="0 0 14 14"><circle cx="7" cy="7" r="5.6" stroke="#e8eaed" stroke-width="1.4" fill="none"/><circle cx="5" cy="5.6" r="0.9" fill="#e8eaed"/><circle cx="9" cy="5.6" r="0.9" fill="#e8eaed"/><path d="M4.3 8a2.8 2.8 0 0 0 5.4 0Z" fill="#e8eaed"/></svg></div>
<div class="btn" style="left:500px"><svg class="a" style="left:5px;top:6px" width="16" height="14" viewBox="0 0 16 14"><rect x="1.5" y="2" width="13" height="10" rx="1" stroke="#e8eaed" stroke-width="1.4" fill="none"/><path d="M8 4.5L11 7.5H9V9.5H7V7.5H5Z" fill="#e8eaed"/></svg></div>
<div class="btn" style="left:535px"><svg class="a" style="left:6px;top:5px" width="14" height="16" viewBox="0 0 14 16"><path d="M3.5 9V4.2a.9.9 0 0 1 1.8 0V8M5.3 8V2.6a.9.9 0 0 1 1.8 0V8M7.1 8V3a.9.9 0 0 1 1.8 0V8M8.9 8V4.4a.9.9 0 0 1 1.8 0V10c0 2.6-1.7 4.4-4 4.4-1.8 0-2.8-1-3.6-2.3L1.3 9a.9.9 0 0 1 1.5-.9L3.5 9" stroke="#e8eaed" stroke-width="1.1" fill="none"/></svg></div>
<div class="btn" style="left:570px"><div class="a" style="left:11.5px;top:6.5px;width:3px;height:3px;border-radius:50%;background:#e8eaed;box-shadow:0 5px 0 #e8eaed,0 10px 0 #e8eaed"></div></div>
<div class="a" style="left:606px;top:510px;width:37px;height:26px;border-radius:13px;background:#ea4335"><svg class="a" style="left:11px;top:9px" width="15" height="8" viewBox="0 0 15 8"><path d="M1 4.2C4.5 1 10.5 1 14 4.2L12.3 6.3L10 5V3.6C8.3 3 6.7 3 5 3.6V5L2.7 6.3Z" fill="#fff"/></svg></div>

<!-- right controls -->
<div class="a" style="left:948.5px;top:503px;width:18px;height:11px;border-radius:6px;background:#505357"></div>
<div class="t" style="left:952.5px;top:505px;font-size:7.5px;color:#e8eaed;font-weight:bold">13</div>
<svg class="a" style="left:906px;top:515px" width="17" height="17" viewBox="0 0 17 17"><circle cx="8.5" cy="8.5" r="6.8" stroke="#eceef0" stroke-width="1.9" fill="none"/><rect x="7.5" y="7.2" width="2" height="5" fill="#eceef0"/><circle cx="8.5" cy="5" r="1.15" fill="#eceef0"/></svg>
<svg class="a" style="left:938px;top:515px" width="19" height="17" viewBox="0 0 19 17"><circle cx="7" cy="5" r="2.7" stroke="#eceef0" stroke-width="1.9" fill="none"/><path d="M1.5 14.5V13c0-2 2.5-3.3 5.5-3.3S12.5 11 12.5 13v1.5Z" stroke="#eceef0" stroke-width="1.9" fill="none"/><path d="M11.8 2.3a2.8 2.8 0 0 1 0 5.4Z" fill="#eceef0"/><path d="M14.5 10.2c1.5.6 2.8 1.5 2.8 2.8v1.5h-3Z" fill="#eceef0"/></svg>
<svg class="a" style="left:972px;top:515px" width="17" height="17" viewBox="0 0 17 17"><path d="M2 2H15V12H5L2 15Z" stroke="#eceef0" stroke-width="1.8" fill="none" stroke-linejoin="round"/><path d="M5 5.2H12M5 7.5H12M5 9.8H10" stroke="#eceef0" stroke-width="1.3"/></svg>
<svg class="a" style="left:1004px;top:514px" width="17" height="18" viewBox="0 0 17 18"><path d="M8.5 1.8L11.8 7H5.2Z" stroke="#eceef0" stroke-width="1.7" fill="#eceef0" stroke-linejoin="round"/><rect x="2" y="10" width="5.2" height="5.2" stroke="#eceef0" stroke-width="1.7" fill="none"/><circle cx="12.5" cy="12.6" r="2.8" stroke="#eceef0" stroke-width="1.7" fill="none"/></svg>

<!-- TASKBAR -->
<div id="taskbar" class="a">
  <div class="a" style="left:13px;top:13.5px;width:17px;height:8px;border-radius:4px;background:linear-gradient(#e3ebf8,#b4cbec)"></div>
  <div class="a" style="left:17px;top:9.5px;width:9px;height:9px;border-radius:50%;background:#dfe8f6"></div>
  <div class="t" style="left:35px;top:8px;font-size:8px;color:#e6e6e6">-2°C</div>
  <div class="t" style="left:35px;top:18.5px;font-size:8px;color:#cfcfcf">Cloudy</div>

  <div class="a" style="left:451px;top:10px;width:7.5px;height:7.5px;background:#5cc6f5"></div>
  <div class="a" style="left:459.5px;top:10px;width:7.5px;height:7.5px;background:#4fb9ef"></div>
  <div class="a" style="left:451px;top:18.5px;width:7.5px;height:7.5px;background:#3ea8e6"></div>
  <div class="a" style="left:459.5px;top:18.5px;width:7.5px;height:7.5px;background:#2f98dc"></div>

  <div class="a" style="left:481px;top:8px;width:16px;height:16px;border-radius:50%;background:conic-gradient(from 200deg,#0c59a4,#1e90d8 30%,#4ccf8c 55%,#2aa6d8 75%,#0c59a4)"></div>
  <div class="a" style="left:486px;top:13px;width:7px;height:7px;border-radius:50%;background:#1b4d87"></div>
  <div class="a" style="left:486px;top:27px;width:5px;height:2px;border-radius:1px;background:#9aa0a6"></div>

  <div class="a" style="left:511px;top:9px;width:16px;height:16px;border-radius:50%;background:linear-gradient(#39a9e0,#1e88c7)"></div>
  <svg class="a" style="left:514px;top:13px" width="10" height="8" viewBox="0 0 10 8"><path d="M0.5 3.8L9 0.5L7.5 7.5L4.5 5.5L3.5 7V5Z" fill="#fff"/></svg>
  <div class="a" style="left:521px;top:5.5px;width:10px;height:10px;border-radius:50%;background:#e0404a"></div>
  <div class="t" style="left:524px;top:7px;font-size:6px;color:#fff">2</div>
  <div class="a" style="left:517px;top:27px;width:5px;height:2px;border-radius:1px;background:#9aa0a6"></div>

  <div class="a" style="left:535px;top:3px;width:26px;height:30px;border-radius:3px;background:#393b40"></div>
  <svg class="a" style="left:540px;top:9.5px" width="18" height="15" viewBox="0 0 18 15"><path d="M0 4L4 0H11V4H4V11H0Z" fill="#ea4335"/><path d="M4 0H11V4H4Z" fill="#fbbc04"/><path d="M0 4H4V11H0Z" fill="#1f6fd6"/><path d="M0 11H4V15H2a2 2 0 0 1-2-2Z" fill="#1a5bb8"/><path d="M4 11H11V15H4Z" fill="#34a853"/><path d="M11 0V15H11L11 10L17 14V1L11 5Z" fill="#34a853"/><path d="M11 4H4V11H11Z" fill="#fff" opacity=".0"/><path d="M11 0H12a1 1 0 0 1 1 1V4H11Z" fill="#f9bb06"/><path d="M4 4H11V11H4Z" fill="#2f8f4a" opacity=".25"/></svg>
  <div class="a" style="left:543px;top:28px;width:10px;height:2px;border-radius:1px;background:#a9adb3"></div>

  <div class="a" style="left:570px;top:8.5px;width:16px;height:16px;border-radius:50%;background:#1db954"></div>
  <svg class="a" style="left:572px;top:11px" width="12" height="11" viewBox="0 0 12 11"><path d="M2 3.5C5 2.6 8 2.8 10.3 4M2.6 6C5 5.3 7.5 5.5 9.4 6.5M3 8.3C5 7.8 7 8 8.5 8.8" stroke="#0f2a16" stroke-width="1.2" fill="none" stroke-linecap="round"/></svg>

  <svg class="a" style="left:798px;top:13px" width="10" height="7" viewBox="0 0 10 7"><path d="M1 6L5 2L9 6" stroke="#e6e6e6" stroke-width="1.3" fill="none"/></svg>
  <div class="a" style="left:819px;top:9px;width:14px;height:14px;border-radius:50%;background:radial-gradient(circle at 75% 65%,#e0405a 0,#c04070 22%,transparent 35%),radial-gradient(circle at 40% 40%,#7ab8f5,#2f6fd0 70%,#1d4fa8)"></div>
  <svg class="a" style="left:842px;top:8px" width="10" height="16" viewBox="0 0 10 16"><rect x="3" y="1" width="4" height="8" rx="2" stroke="#d6d6d6" stroke-width="1.1" fill="none"/><path d="M1.2 7a3.8 3.8 0 0 0 7.6 0M5 11v3" stroke="#d6d6d6" stroke-width="1.1" fill="none"/></svg>
  <svg class="a" style="left:862px;top:10px" width="14" height="11" viewBox="0 0 14 11"><rect x="0.6" y="0.6" width="12.8" height="9.8" rx="1" stroke="#cfcfcf" stroke-width="1" fill="none"/><path d="M3 3.5h8M3 5.5h8M4 7.8h6" stroke="#cfcfcf" stroke-width="0.9"/></svg>
  <div class="t" style="left:887px;top:12px;font-size:7.5px;color:#e6e6e6;font-weight:bold">УКР</div>
  <svg class="a" style="left:913px;top:9px" width="14" height="14" viewBox="0 0 14 14"><path d="M7 1v12M2 5.5L7 7.5L12 5.5M4 12L7 10.5L10 12" stroke="#d6d6d6" stroke-width="1.2" fill="none"/></svg>
  <svg class="a" style="left:930px;top:9px" width="14" height="14" viewBox="0 0 14 14"><path d="M1.5 5H4L7.5 2V12L4 9H1.5Z" stroke="#d6d6d6" stroke-width="1.1" fill="none"/><path d="M9.5 4.5a3 3 0 0 1 0 5M11.3 3a5 5 0 0 1 0 8" stroke="#d6d6d6" stroke-width="1" fill="none"/></svg>
  <svg class="a" style="left:947px;top:10px" width="16" height="11" viewBox="0 0 16 11"><rect x="0.7" y="1.5" width="10" height="8" rx="1.5" stroke="#d6d6d6" stroke-width="1.2" fill="none"/><rect x="11.5" y="4" width="1.5" height="3" fill="#d6d6d6"/><path d="M6 3L4 6H7L5.5 8.5" stroke="#d6d6d6" stroke-width="0.9" fill="none"/></svg>
  <div class="t" style="left:988px;top:7.5px;font-size:8px;color:#eaeaea">14:07</div>
  <div class="t" style="left:969px;top:18px;font-size:8px;color:#eaeaea">08.12.2023</div>
  <svg class="a" style="left:1013px;top:9px" width="12" height="14" viewBox="0 0 12 14"><path d="M2 10V6.5a4 4 0 0 1 8 0V10L11 11H1Z M4.5 12.3a1.6 1.6 0 0 0 3 0" stroke="#d6d6d6" stroke-width="1.1" fill="none"/></svg>
</div>

</body></html>
